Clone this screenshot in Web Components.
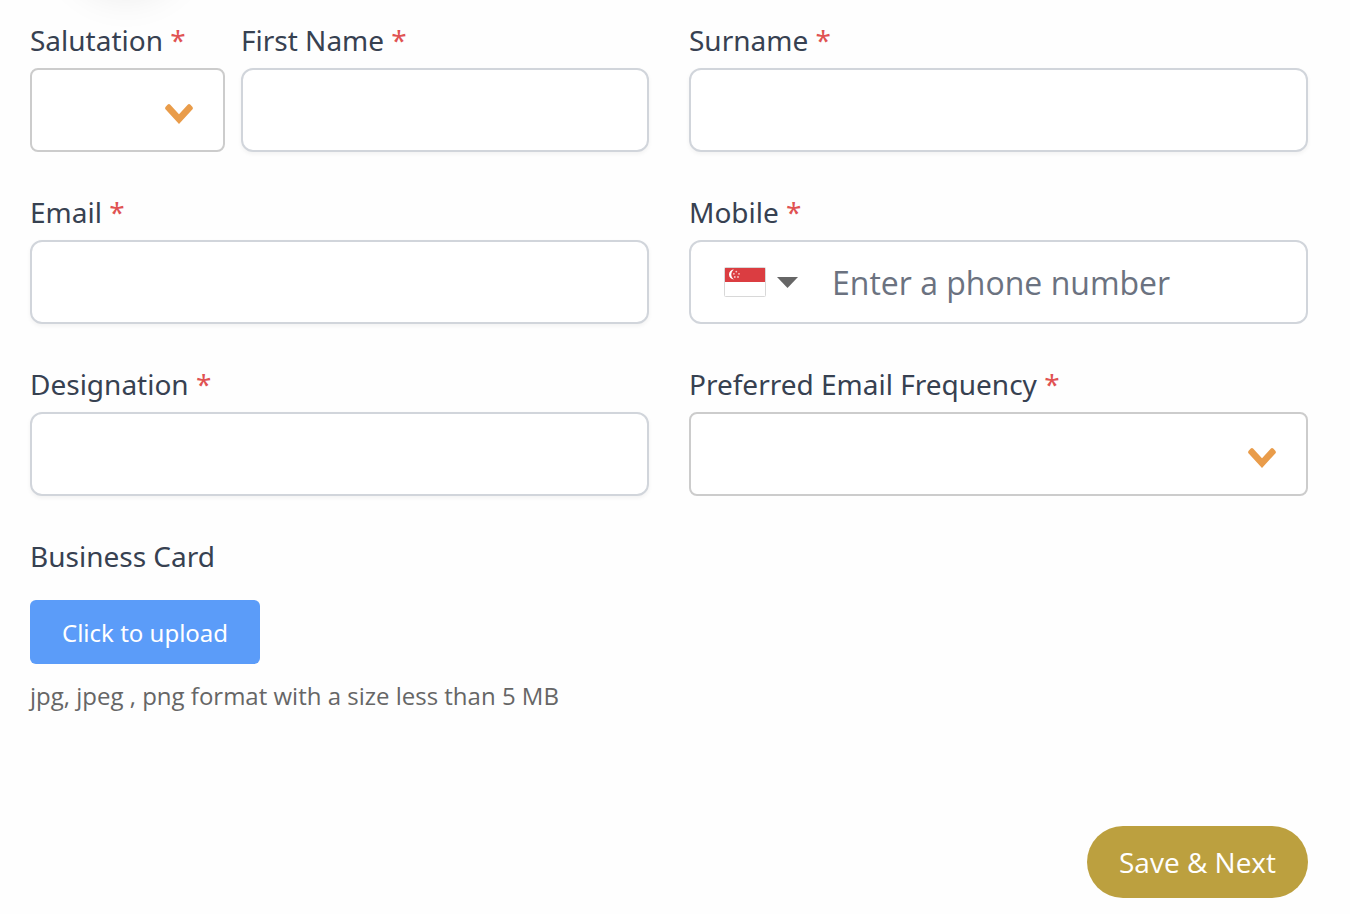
<!DOCTYPE html>
<html lang="en">
<head>
<meta charset="utf-8">
<meta name="viewport" content="width=device-width, initial-scale=1">
<title>Contact details</title>
<style>
body{margin:0;background:#fefefe;font-family:"Open Sans","Noto Sans",sans-serif;color:#374151;--label-font:"Noto Sans","Open Sans",sans-serif}
</style>
</head>
<body>
<contact-form></contact-form>
<script>
const fieldBase = `
:host{display:block;min-width:0}
*{box-sizing:border-box}
label{display:block;font-family:var(--label-font);font-size:28px;line-height:40px;margin-bottom:8px;color:#374151;white-space:nowrap}
.star{color:#e05252}
input,select{font:inherit;color:inherit;outline-color:#e99c4a}
`;
const labelRow = '<label for="control"><slot></slot><span class="star" hidden> *</span></label>';

class BaseField extends HTMLElement {
  constructor() {
    super();
    const root = this.attachShadow({ mode: "open" });
    root.innerHTML = `<style>${fieldBase}${this.styles}</style>${labelRow}${this.control}`;
  }
  connectedCallback() {
    const required = this.hasAttribute("required");
    this.shadowRoot.querySelector(".star").hidden = !required;
    this.shadowRoot.querySelector("#control").required = required;
  }
}

customElements.define("text-field", class extends BaseField {
  get styles() {
    return `input{display:block;width:100%;height:84px;padding:0 24px;font-size:32px;background:#fff;
      border:2px solid #d1d5db;border-radius:12px;box-shadow:0 2px 4px rgba(0,0,0,.05)}`;
  }
  get control() { return '<input id="control" type="text">'; }
});

customElements.define("select-field", class extends BaseField {
  get styles() {
    return `.wrap{display:grid}
    .wrap>*{grid-area:1/1}
    select{appearance:none;width:100%;height:84px;padding:0 64px 0 24px;font-size:32px;background:#fff;
      border:2px solid #ccc;border-radius:8px}
    svg{place-self:center end;width:28px;height:20px;margin:8px 32px 0 0;pointer-events:none;z-index:1}`;
  }
  get control() {
    return `<div class="wrap"><select id="control"><option></option></select>
      <svg viewBox="0 0 28 20" aria-hidden="true"><path d="M.7 5.5Q-.5 4.2.7 2.700L2.500.8Q4-.6 5.300.8L14 10.300 22.700.8Q24-.6 25.500.8L27.300 2.700Q28.500 4.200 27.300 5.500L14 20Z" fill="#e99c4a"/></svg></div>`;
  }
});

customElements.define("phone-field", class extends BaseField {
  get styles() {
    return `.box{display:flex;align-items:center;height:84px;border:2px solid #d1d5db;border-radius:12px;background:#fff}
    button{display:flex;align-items:center;gap:10px;padding:0 12px 0 32px;height:100%;border:0;background:none}
    .flag{width:44px;height:32px}
    .caret{width:21px;height:11px}
    input{flex:1;min-width:0;height:100%;padding:0 24px 0 22px;border:0;border-radius:12px;background:none;font-size:32px}
    input::placeholder{color:#6b7280;opacity:1}`;
  }
  get control() {
    return `<div class="box"><button type="button" aria-label="Country: Singapore">
      <svg class="flag" viewBox="0 0 44 32" aria-hidden="true">
        <rect x="1.500" y="1.500" width="41" height="29" rx="1" fill="#fff" stroke="#d8d8d8"/>
        <path d="M2 2H42V16H2Z" fill="#db3d41"/>
        <path d="M11 3.500A5 5 0 1 0 11 13.500A6 6 0 0 1 11 3.500Z" fill="#fff"/>
        <g fill="#f6c9ca"><circle cx="13.300" cy="5.600" r=".9"/><circle cx="10.900" cy="7.800" r=".9"/><circle cx="16" cy="7.800" r=".9"/><circle cx="11.800" cy="11" r=".9"/><circle cx="15" cy="11" r=".9"/></g>
      </svg>
      <svg class="caret" viewBox="0 0 21 11" aria-hidden="true"><path d="M0 0H21L10.500 11Z" fill="#666"/></svg>
    </button><input id="control" type="tel" placeholder="Enter a phone number"></div>`;
  }
});

customElements.define("action-button", class extends HTMLElement {
  constructor() {
    super();
    this.attachShadow({ mode: "open" }).innerHTML = `<style>
    :host{display:inline-block;vertical-align:top}
    button{display:block;font-family:var(--label-font);border:0;color:#fff;cursor:pointer;padding:0 32px;white-space:nowrap;
      height:64px;font-size:24px;background:#5b9cf9;border-radius:6px}
    :host([kind="primary"]) button{height:72px;font-family:inherit;font-size:28px;background:#bca03f;border-radius:36px}
    </style><button type="button"><slot></slot></button>`;
  }
});

customElements.define("upload-field", class extends HTMLElement {
  constructor() {
    super();
    this.attachShadow({ mode: "open" }).innerHTML = `<style>
    :host{display:block}
    .title{font-family:var(--label-font);font-size:28px;line-height:40px;margin-bottom:24px}
    p{margin:12px 0 0;font-size:24px;line-height:40px;color:#666}
    </style><div class="title"><slot></slot></div>
    <action-button>Click to upload</action-button>
    <p>jpg, jpeg , png format with a size less than 5 MB</p>`;
  }
});

customElements.define("contact-form", class extends HTMLElement {
  constructor() {
    super();
    this.attachShadow({ mode: "open" }).innerHTML = `<style>
    :host{display:block;position:relative;overflow:hidden}
    .glow{position:absolute;top:-120px;left:68px;width:116px;height:116px;border-radius:50%;box-shadow:0 0 40px rgba(0,0,0,.09)}
    form{position:relative;padding:20px 42px 16px 30px}
    .grid{display:grid;grid-template-columns:minmax(0,1fr) minmax(0,1fr);gap:40px}
    .name{display:grid;grid-template-columns:195px minmax(0,1fr);gap:16px}
    footer{display:flex;justify-content:flex-end;margin-top:110px}
    </style>
    <div class="glow"></div>
    <form>
      <div class="grid">
        <div class="name">
          <select-field required>Salutation</select-field>
          <text-field required>First Name</text-field>
        </div>
        <text-field required>Surname</text-field>
        <text-field required>Email</text-field>
        <phone-field required>Mobile</phone-field>
        <text-field required>Designation</text-field>
        <select-field required>Preferred Email Frequency</select-field>
        <upload-field>Business Card</upload-field>
      </div>
      <footer><action-button kind="primary">Save &amp; Next</action-button></footer>
    </form>`;
  }
});
</script>
</body>
</html>
